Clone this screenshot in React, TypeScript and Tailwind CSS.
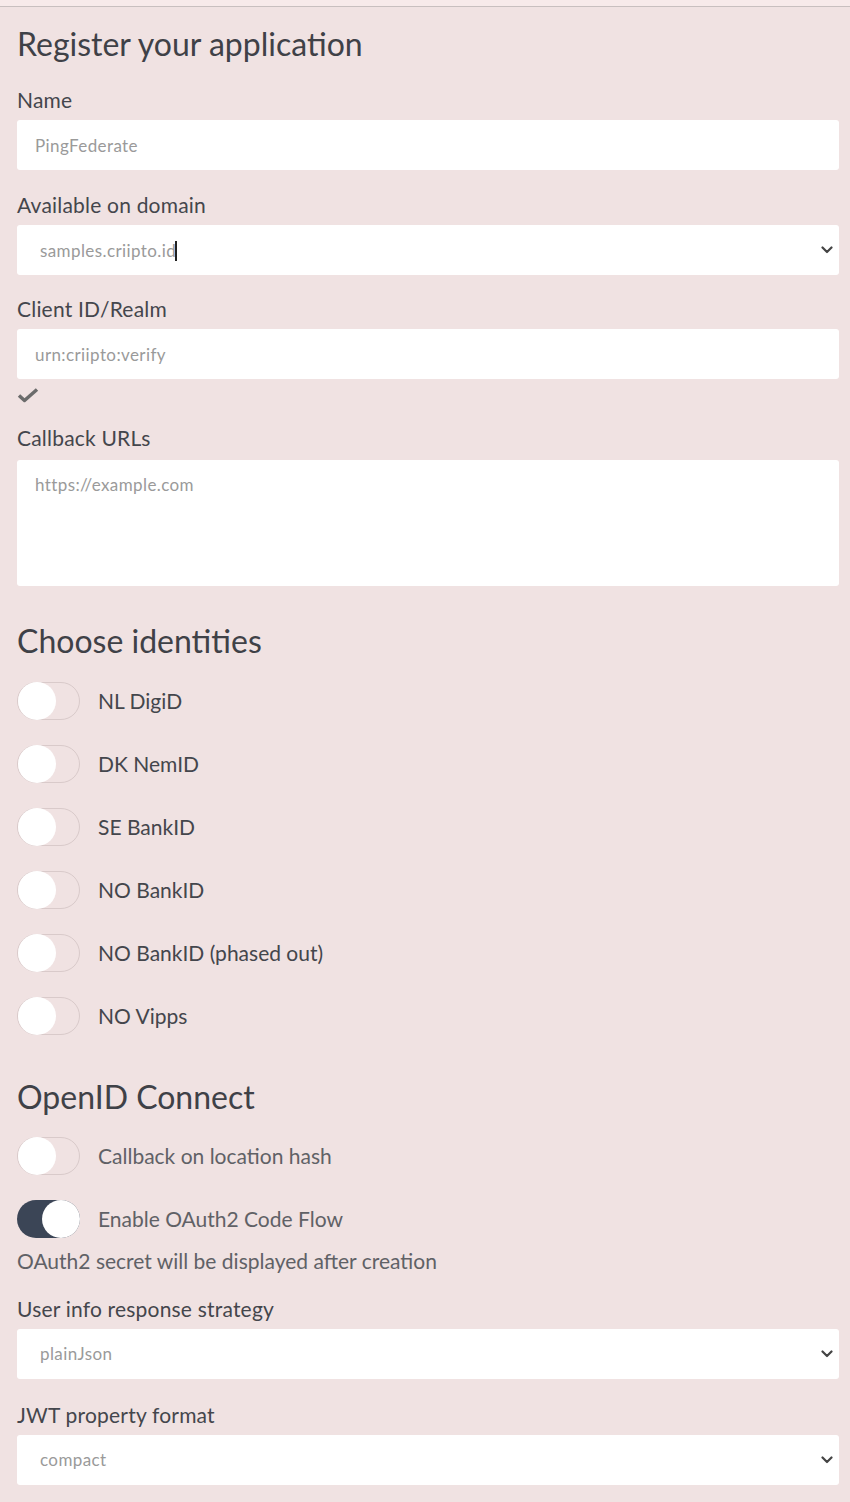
import React from 'react';

const font = { fontFamily: 'Lato, "Open Sans", sans-serif' };

function Label({ children, className = '' }: { children: React.ReactNode; className?: string }) {
  return <div className={`text-[21px] leading-[24px] tracking-[0.2px] text-[#44464c] ${className}`}>{children}</div>;
}

function TextInput({ value }: { value: string }) {
  return (
    <input
      readOnly
      placeholder={value}
      className="mt-2 block h-[50px] w-full rounded-[3px] bg-white pl-[18px] text-[17px] tracking-[0.4px] text-[#999] placeholder:text-[#9a9a9a] outline-none"
      style={font}
    />
  );
}

function Chevron() {
  return (
    <svg width="12" height="8" viewBox="0 0 12 8" className="shrink-0">
      <path d="M1.5 1.5 L6 6 L10.5 1.5" fill="none" stroke="#444" strokeWidth="2.2" strokeLinecap="round" strokeLinejoin="round" />
    </svg>
  );
}

function Select({ value, caret = false }: { value: string; caret?: boolean }) {
  return (
    <div className="mt-2 flex h-[50px] w-full items-center rounded-[3px] bg-white pl-[23px] pr-[6px]">
      <span className="flex-1 text-[17px] tracking-[0.4px] text-[#9a9a9a]">
        {value}
        {caret && <span className="ml-[-1px] inline-block h-[20px] w-[2px] translate-y-[4px] bg-[#222]" />}
      </span>
      <Chevron />
    </div>
  );
}

function Toggle({ label, on = false, muted = false }: { label: string; on?: boolean; muted?: boolean }) {
  return (
    <div className="flex items-center">
      <div
        className={`flex h-[38px] w-[63px] items-center rounded-full ${
          on ? 'justify-end bg-[#3b4556]' : 'justify-start border border-[#d9caca]'
        }`}
      >
        <div className="h-[38px] w-[38px] rounded-full bg-white" />
      </div>
      <span className={`ml-[18px] text-[21px] ${muted ? 'text-[#606166]' : 'text-[#44464c]'}`}>{label}</span>
    </div>
  );
}

export default function App() {
  const identities = ['NL DigiD', 'DK NemID', 'SE BankID', 'NO BankID', 'NO BankID (phased out)', 'NO Vipps'];

  return (
    <div className="min-h-[1502px] w-[850px] bg-[#f0e2e2]" style={font}>
      <div className="h-[7px] border-b border-[#c8bfbf] bg-[#f7eaea]" />
      <main className="pl-[17px] pr-[11px] pb-6">
        <h1 className="mt-[19px] text-[32px] leading-[36px] text-[#3f4147]">Register your application</h1>

        <Label className="mt-[26px]">Name</Label>
        <TextInput value="PingFederate" />

        <Label className="mt-[23px]">Available on domain</Label>
        <Select value="samples.criipto.id" caret />

        <Label className="mt-[22px]">Client ID/Realm</Label>
        <TextInput value="urn:criipto:verify" />
        <svg width="22" height="16" viewBox="0 0 22 16" className="mt-[8px]">
          <path d="M2 8.5 L7.5 13.5 L20 2.5" fill="none" stroke="#6b6b6b" strokeWidth="3.5" strokeLinejoin="round" />
        </svg>

        <Label className="mt-[23px]">Callback URLs</Label>
        <textarea
          readOnly
          placeholder="https://example.com"
          className="mt-[10px] block h-[126px] w-full resize-none rounded-[3px] bg-white px-[18px] pt-[12px] text-[17px] tracking-[0.4px] placeholder:text-[#9a9a9a] outline-none"
          style={font}
        />

        <h2 className="mt-[37px] text-[32px] leading-[36px] text-[#3f4147]">Choose identities</h2>
        <div className="mt-[23px] flex flex-col gap-[25px]">
          {identities.map((name) => (
            <Toggle key={name} label={name} />
          ))}
        </div>

        <h2 className="mt-[44px] text-[32px] leading-[36px] text-[#3f4147]">OpenID Connect</h2>
        <div className="mt-[22px] flex flex-col gap-[25px]">
          <Toggle label="Callback on location hash" muted />
          <Toggle label="Enable OAuth2 Code Flow" on muted />
        </div>
        <div className="mt-[11px] text-[21px] leading-[24px] text-[#606166]">OAuth2 secret will be displayed after creation</div>

        <Label className="mt-[24px]">User info response strategy</Label>
        <Select value="plainJson" />

        <Label className="mt-[24px]">JWT property format</Label>
        <Select value="compact" />
      </main>
    </div>
  );
}
